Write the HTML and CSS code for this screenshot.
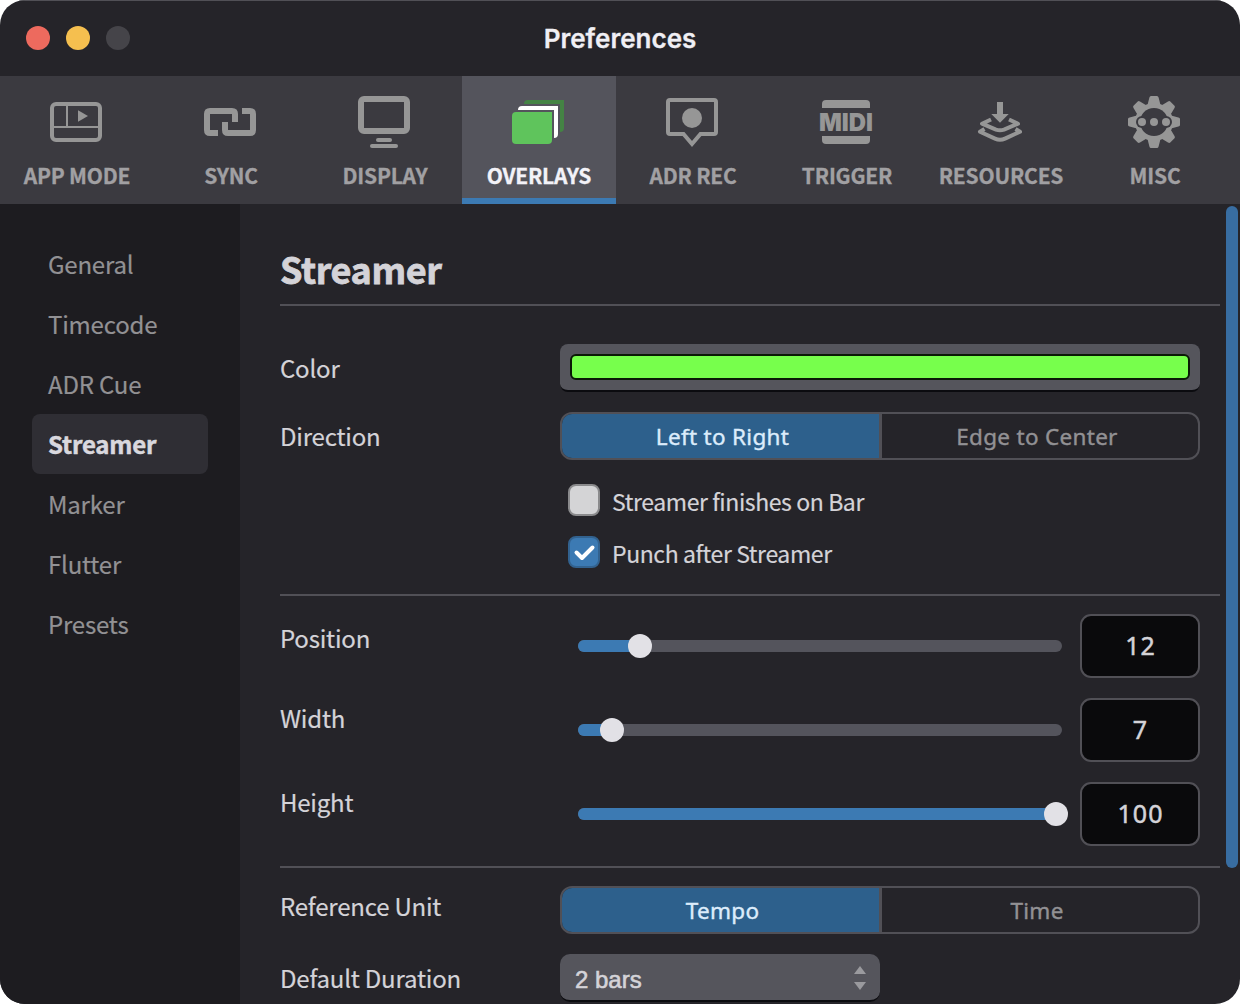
FILE: index.html
```html
<!DOCTYPE html>
<html lang="en">
<head>
    <meta charset="UTF-8">
    <meta name="viewport" content="width=device-width, initial-scale=1.0">
    <title>Preferences</title>
    <link rel="stylesheet" href="styles.css">
</head>
<body>
    <div class="window">
        <header class="titlebar">
            <div class="lights">
                <span class="light close"></span>
                <span class="light minimize"></span>
                <span class="light disabled"></span>
            </div>
            <h1>Preferences</h1>
        </header>

        <nav class="toolbar">
            <a class="tab">
                <svg class="icon" viewBox="0 0 52 52">
                    <rect x="2" y="8" width="48" height="36" rx="4" fill="none" stroke="currentColor" stroke-width="4"/>
                    <path d="M17 9V31M3 31H49" fill="none" stroke="currentColor" stroke-width="2"/>
                    <path d="M28 14.3L38 20L28 25.7Z"/>
                </svg>
                <span class="tab-name">APP MODE</span>
            </a>
            <a class="tab">
                <svg class="icon" viewBox="0 0 52 52">
                    <g fill="none" stroke="currentColor" stroke-width="6">
                        <path d="M14 37H6Q3 37 3 34V18Q3 15 6 15H28Q31 15 31 18V26"/>
                        <path d="M38 15H46Q49 15 49 18V34Q49 37 46 37H24Q21 37 21 34V26"/>
                    </g>
                </svg>
                <span class="tab-name">SYNC</span>
            </a>
            <a class="tab">
                <svg class="icon" viewBox="0 0 52 52">
                    <rect x="3" y="3" width="46" height="32" rx="3" fill="none" stroke="currentColor" stroke-width="6"/>
                    <rect x="18" y="42" width="16" height="4" rx="2"/>
                    <rect x="12" y="48" width="28" height="4" rx="2"/>
                </svg>
                <span class="tab-name">DISPLAY</span>
            </a>
            <a class="tab active">
                <svg class="icon" viewBox="0 0 52 52">
                    <path d="M12 8Q12 4 16 4H52V32Q52 36 48 36V8Z" fill="#448344"/>
                    <path d="M6 14Q6 10 10 10H46V38Q46 42 42 42V14Z" fill="#fff"/>
                    <path d="M4 16H40V44Q40 48 36 48H4Q0 48 0 44V20Q0 16 4 16Z" fill="#5fc45c"/>
                </svg>
                <span class="tab-name">OVERLAYS</span>
            </a>
            <a class="tab">
                <svg class="icon" viewBox="0 0 52 52">
                    <path d="M4 4H48Q50 4 50 6V36Q50 38 48 38H34.5L26 48L17.5 38H4Q2 38 2 36V6Q2 4 4 4Z" fill="none" stroke="currentColor" stroke-width="4"/>
                    <circle cx="26" cy="22" r="10"/>
                </svg>
                <span class="tab-name">ADR REC</span>
            </a>
            <a class="tab">
                <svg class="icon" viewBox="0 0 52 52">
                    <path d="M2 12V8Q2 4 6 4H46Q50 4 50 8V12Z"/>
                    <text class="midi" x="-1" y="35" textLength="54" lengthAdjust="spacingAndGlyphs">MIDI</text>
                    <path d="M2 40V44Q2 48 6 48H46Q50 48 50 44V40Z"/>
                </svg>
                <span class="tab-name">TRIGGER</span>
            </a>
            <a class="tab">
                <svg class="icon" viewBox="0 0 52 52">
                    <path d="M23 6H29V18H34.7L26 26.7L17.3 18H23Z"/>
                    <g fill="none" stroke="currentColor" stroke-width="4" stroke-linejoin="round">
                        <path d="M17 23.5L8 27.7L22 33.6Q26 35 30 33.6L44 27.7L35 23.5"/>
                        <path d="M10.5 33L6 35.7L21 42.6Q26 45 31 42.6L46 35.7L41.5 33"/>
                    </g>
                </svg>
                <span class="tab-name">RESOURCES</span>
            </a>
            <a class="tab">
                <svg class="icon" viewBox="0 0 52 52">
                    <defs>
                        <path id="tooth" d="M19.5 9L21.4 1.6Q21.8 0 23 0H29Q30.2 0 30.6 1.6L32.5 9Z"/>
                        <mask id="hole">
                            <rect width="52" height="52" fill="#fff"/>
                            <circle cx="26" cy="26" r="14" fill="#000"/>
                            <circle cx="14" cy="26" r="6" fill="#000"/>
                            <circle cx="38" cy="26" r="6" fill="#000"/>
                        </mask>
                    </defs>
                    <g mask="url(#hole)">
                        <circle cx="26" cy="26" r="19"/>
                        <use href="#tooth"/>
                        <use href="#tooth" transform="rotate(45 26 26)"/>
                        <use href="#tooth" transform="rotate(90 26 26)"/>
                        <use href="#tooth" transform="rotate(135 26 26)"/>
                        <use href="#tooth" transform="rotate(180 26 26)"/>
                        <use href="#tooth" transform="rotate(225 26 26)"/>
                        <use href="#tooth" transform="rotate(270 26 26)"/>
                        <use href="#tooth" transform="rotate(315 26 26)"/>
                    </g>
                    <circle cx="14" cy="26" r="4"/>
                    <circle cx="26" cy="26" r="4"/>
                    <circle cx="38" cy="26" r="4"/>
                </svg>
                <span class="tab-name">MISC</span>
            </a>
        </nav>

        <div class="main">
            <aside class="sidebar">
                <a class="side-item">General</a>
                <a class="side-item">Timecode</a>
                <a class="side-item">ADR Cue</a>
                <a class="side-item active">Streamer</a>
                <a class="side-item">Marker</a>
                <a class="side-item">Flutter</a>
                <a class="side-item">Presets</a>
            </aside>

            <section class="content">
                <h2>Streamer</h2>

                <div class="group">
                    <div class="row">
                        <span class="label">Color</span>
                        <div class="color-well"><div class="swatch"></div></div>
                    </div>
                    <div class="row">
                        <span class="label">Direction</span>
                        <div class="segmented">
                            <span class="segment on">Left to Right</span>
                            <span class="segment">Edge to Center</span>
                        </div>
                    </div>
                    <div class="checks">
                        <div class="check">
                            <span class="box"></span>
                            <span>Streamer finishes on Bar</span>
                        </div>
                        <div class="check">
                            <span class="box checked">
                                <svg viewBox="0 0 32 32"><path d="M8.5 16.5L14 22L24.5 11.5"/></svg>
                            </span>
                            <span>Punch after Streamer</span>
                        </div>
                    </div>
                </div>

                <div class="group sliders">
                    <div class="row first">
                        <span class="label">Position</span>
                        <div class="slider">
                            <div class="fill" style="width: 62.4px"></div>
                            <div class="knob"></div>
                        </div>
                        <div class="number">12</div>
                    </div>
                    <div class="row">
                        <span class="label">Width</span>
                        <div class="slider">
                            <div class="fill" style="width: 34.4px"></div>
                            <div class="knob"></div>
                        </div>
                        <div class="number">7</div>
                    </div>
                    <div class="row">
                        <span class="label">Height</span>
                        <div class="slider">
                            <div class="fill" style="width: 478px"></div>
                            <div class="knob"></div>
                        </div>
                        <div class="number">100</div>
                    </div>
                </div>

                <div class="group last">
                    <div class="row">
                        <span class="label raised">Reference Unit</span>
                        <div class="segmented">
                            <span class="segment on">Tempo</span>
                            <span class="segment">Time</span>
                        </div>
                    </div>
                    <div class="row">
                        <span class="label">Default Duration</span>
                        <div class="select">
                            <span>2 bars</span>
                            <svg viewBox="0 0 12 24"><path d="M0 8L6 0L12 8ZM0 16L6 24L12 16Z"/></svg>
                        </div>
                    </div>
                </div>
            </section>

            <div class="scrollbar"><div class="thumb"></div></div>
        </div>
    </div>
</body>
</html>
```
FILE: styles.css
```css
* {
    box-sizing: border-box;
}
body {
    margin: 0;
    background: #fff;
    font-family: "Noto Sans CJK JP", "Noto Sans", sans-serif;
    font-size: 24px;
    line-height: 36px;
    letter-spacing: -0.2px;
    color: #d4d3d8;
}
.window {
    display: flex;
    flex-direction: column;
    width: 1240px;
    height: 1004px;
    border-radius: 25px;
    overflow: hidden;
    background: #252429;
}
.titlebar {
    display: grid;
    grid-template-columns: 1fr auto 1fr;
    align-items: center;
    height: 76px;
    padding: 0 26px 1px;
    border-top: 1px solid #515056;
}
.lights {
    display: flex;
    gap: 16px;
}
.light {
    width: 24px;
    height: 24px;
    border-radius: 50%;
}
.close {
    background: #ed6a5e;
}
.minimize {
    background: #f5bf4f;
}
.disabled {
    background: #454449;
}
h1 {
    margin: 0;
    padding-top: 1px;
    font-family: Inter, sans-serif;
    font-size: 26px;
    font-weight: 600;
    letter-spacing: 0;
    color: #f0eff4;
    -webkit-text-stroke: 0.3px;
}
.toolbar {
    display: flex;
    height: 128px;
    background: #3b3a40;
}
.tab {
    display: flex;
    flex-direction: column;
    align-items: center;
    width: 154px;
    padding-top: 20px;
    color: #969696;
    border-bottom: 6px solid transparent;
}
.tab.active {
    background: #54545c;
    border-bottom-color: #3c7ab3;
}
.icon {
    width: 52px;
    height: 52px;
    margin-left: -2px;
    fill: currentColor;
    overflow: visible;
}
.midi {
    font-family: Inter, sans-serif;
    font-size: 24.5px;
    font-weight: 900;
    letter-spacing: 0;
}
.tab-name {
    margin-top: 9px;
    font-size: 21px;
    font-weight: bold;
    letter-spacing: -0.2px;
    color: #a1a0a3;
    -webkit-text-stroke: 0.3px;
}
.active .tab-name {
    color: #f3f2f8;
}
.main {
    display: flex;
    height: 800px;
}
.sidebar {
    width: 240px;
    padding: 30px 32px;
    background: #1d1c20;
}
.side-item {
    display: block;
    height: 60px;
    padding: 0 16px;
    line-height: 60px;
    color: #929194;
    border-radius: 8px;
    -webkit-text-stroke: 0.2px;
}
.side-item.active {
    background: #2f2e34;
    color: #d9d8de;
    font-weight: bold;
    -webkit-text-stroke: 0.5px;
}
.content {
    width: 980px;
    padding-left: 40px;
    -webkit-text-stroke: 0.2px;
}
h2 {
    height: 102px;
    margin: 0;
    padding-top: 36px;
    font-size: 36px;
    line-height: 56px;
    letter-spacing: -0.4px;
    border-bottom: 2px solid #515056;
    -webkit-text-stroke: 0.8px;
}
.group {
    padding: 38px 20px 26px 0;
    border-bottom: 2px solid #515056;
}
.row {
    display: flex;
    margin-bottom: 20px;
}
.label {
    width: 280px;
    padding-top: 6px;
}
.color-well {
    width: 640px;
    height: 48px;
    padding: 10px;
    border-bottom: 2px solid #0b0b0f;
    border-radius: 8px;
    background: #55555c;
}
.swatch {
    height: 26px;
    border: 2px solid #0a1a06;
    border-radius: 6px;
    background: #77ff4c;
}
.segmented {
    display: flex;
    width: 640px;
    height: 48px;
    border: 2px solid #515056;
    border-radius: 12px;
    overflow: hidden;
}
.segment {
    width: 316px;
    padding-right: 6px;
    text-align: center;
    font-family: "Noto Sans", sans-serif;
    font-size: 22.5px;
    line-height: 45px;
    letter-spacing: 0.3px;
    color: #929194;
    -webkit-text-stroke: 0.4px;
}
.segment.on {
    width: 320px;
    padding: 0 0 0 4px;
    background: #2d608c;
    border-right: 3px solid #515056;
    color: #dcecfb;
}
.checks {
    padding-left: 288px;
    font-size: 23px;
    line-height: 34px;
    letter-spacing: -0.4px;
}
.check {
    display: flex;
    gap: 12px;
    height: 32px;
    margin: 24px 0 20px;
}
.check + .check {
    margin: 0;
}
.box {
    width: 32px;
    height: 32px;
    border: 2px solid #8a8a8c;
    border-radius: 8px;
    background: #d4d4d6;
}
.box.checked {
    border-color: #32628f;
    background: #3c7ab3;
}
.box svg {
    display: block;
    width: 32px;
    height: 32px;
    margin: -2px;
    fill: none;
    stroke: #fff;
    stroke-width: 4;
    stroke-linecap: round;
    stroke-linejoin: round;
}
.sliders {
    padding: 18px 20px 0 0;
}
.sliders .label {
    width: 298px;
    padding-top: 2px;
}
.sliders .first .label {
    padding-top: 6px;
}
.label.raised {
    padding-top: 2px;
}
.slider {
    display: flex;
    align-items: center;
    width: 484px;
    height: 12px;
    margin: 26px 18px 26px 0;
    border-radius: 6px;
    background: #54545c;
}
.fill {
    height: 12px;
    border-radius: 6px 0 0 6px;
    background: #3c7ab3;
}
.knob {
    flex: none;
    width: 24px;
    height: 24px;
    margin: 0 -12px;
    border-radius: 50%;
    background: #e2e1e6;
}
.number {
    width: 120px;
    height: 64px;
    padding-left: 1px;
    border: 2px solid #515056;
    border-radius: 11px;
    background: #0a0a0c;
    text-align: center;
    font-family: "Noto Sans", sans-serif;
    font-size: 25px;
    line-height: 59px;
    letter-spacing: 1px;
    -webkit-text-stroke: 0.5px;
}
.last {
    padding-top: 18px;
    border-bottom: 0;
}
.select {
    display: flex;
    justify-content: space-between;
    align-items: center;
    width: 320px;
    height: 48px;
    padding: 2px 14px 0 15px;
    border-bottom: 2px solid #0b0b0f;
    border-radius: 10px;
    background: #55555c;
    font-family: "Liberation Sans", sans-serif;
    letter-spacing: 0;
}
.select span {
    padding-top: 3px;
    -webkit-text-stroke: 0.6px;
}
.select svg {
    width: 12px;
    height: 24px;
    fill: #9a9a9e;
}
.scrollbar {
    width: 20px;
    padding: 2px 2px 0 6px;
}
.thumb {
    width: 12px;
    height: 662px;
    border-radius: 6px;
    background: #386da1;
}
```
